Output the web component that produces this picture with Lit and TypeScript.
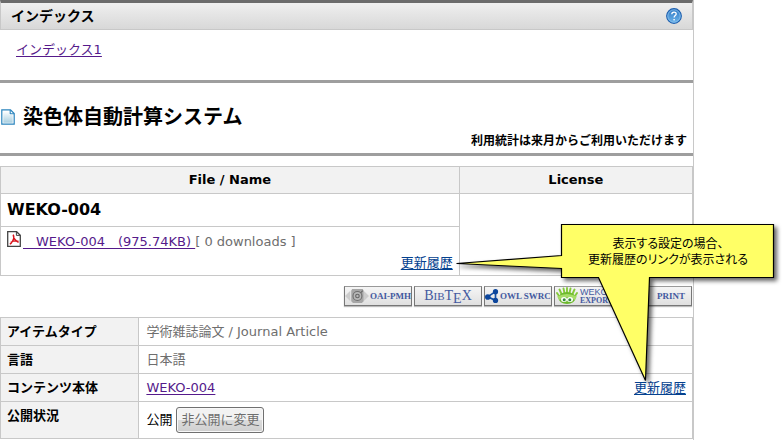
import { LitElement, html, css, svg } from "lit";
import { customElement } from "lit/decorators.js";

const pageIcon = html`<svg class="page-icon" viewBox="0 0 14 16" aria-hidden="true">
  <defs><linearGradient id="pg" x1="0" y1="0" x2="0" y2="1"><stop offset="0" stop-color="#fff"/><stop offset="1" stop-color="#a9cfe0"/></linearGradient></defs>
  <path d="M.8.8H9.5L13.2 4.5V15.2H.8Z" fill="#fff" stroke="#2a84bd" stroke-width="1.2"/>
  <path d="M2.3 2.3H8V6H11.7V13.7H2.3Z" fill="url(#pg)"/>
  <path d="M9.2 1V4.8H13" fill="none" stroke="#2a84bd" stroke-width="1.1"/>
</svg>`;

const pdfIcon = html`<svg class="pdf-icon" viewBox="0 0 14 16" aria-hidden="true">
  <path d="M.7.7H9.6L13.3 4.2V15.3H.7Z" fill="#fff" stroke="#444" stroke-width="1.3"/>
  <path d="M9.4 1V4.4H13" fill="none" stroke="#444" stroke-width="1"/>
  <path d="M6.2 3.6C7.2 5.8 7 8 5.6 10.2 4.8 11.6 3.8 12.8 2.8 13.2M6.6 5.6C7 8 8.4 9.6 11.6 11.4M3.8 11.4C6 10 8.6 9.6 11.4 10.2" fill="none" stroke="#d8141c" stroke-width="1.4"/>
</svg>`;

const helpIcon = html`<svg class="help-icon" viewBox="0 0 16 16" aria-hidden="true">
  <defs><linearGradient id="hg" x1="0" y1="0" x2="0" y2="1"><stop offset="0" stop-color="#2f78c4"/><stop offset="1" stop-color="#6db4ea"/></linearGradient></defs>
  <circle cx="8" cy="8" r="7.3" fill="url(#hg)" stroke="#1e5fae" stroke-width="1.2"/>
  <circle cx="8" cy="8" r="6.2" fill="none" stroke="#8cc3ee" stroke-width=".8"/>
  <path d="M5.8 6.2C5.8 3.4 10.2 3.4 10.2 5.9 10.2 7.6 8.1 7.6 8.1 9.6" fill="none" stroke="#fff" stroke-width="1.3"/>
  <rect x="7.4" y="11" width="1.4" height="1.4" fill="#fff"/>
</svg>`;

const oaiIcon = html`<svg class="oai-icon" viewBox="0 0 27 18" aria-hidden="true">
  <path d="M0 9L6 3V15ZM27 9L21 3V15Z" fill="#ccc"/>
  <path d="M8 1H20L21 3V15L19 17H9L7 15V3Z" fill="#a6a6a6"/>
  <circle cx="14" cy="9" r="5" fill="#b8b8b8" stroke="#6e6e6e" stroke-width="1.2"/>
  <circle cx="14" cy="9" r="2" fill="none" stroke="#666" stroke-width="1.3"/>
  <path d="M17.5 5.5L20 3" stroke="#666" stroke-width="1.2"/>
</svg>`;

const owlIcon = html`<svg class="owl-icon" viewBox="0 0 16 16" aria-hidden="true">
  <path d="M12 3L3 9L12 13Z" fill="none" stroke="#1450a6" stroke-width="1.9"/>
  <circle cx="12" cy="3" r="3" fill="#0c469c"/><circle cx="3.2" cy="9.2" r="3.2" fill="#0c469c"/><circle cx="12" cy="13" r="3" fill="#0c469c"/>
</svg>`;

const wekoIcon = html`<svg class="weko-icon" viewBox="0 0 22 18" aria-hidden="true">
  <path d="M3 9L1 6M5.5 7L3.5 2.5M8.5 6L7.5 1.5M11 6V1M13.5 6L14.5 1.5M16.5 7L18.5 2.5M19 9L21 6" stroke="#84c93a" stroke-width="1.9" stroke-linecap="round"/>
  <ellipse cx="11" cy="11" rx="8.6" ry="6" fill="#6dba2d"/>
  <path d="M1 9.6Q11 4.6 21 9.6L18.6 13Q11 7.6 3.4 13Z" fill="#a6dc68"/>
  <ellipse cx="8" cy="12.4" rx="3" ry="2.5" fill="#fff"/><ellipse cx="14" cy="12.4" rx="3" ry="2.5" fill="#fff"/>
  <circle cx="8.2" cy="12.8" r="1.5" fill="#348b3a"/><circle cx="13.8" cy="12.8" r="1.5" fill="#348b3a"/>
</svg>`;

const calloutShape = svg`
  <path d="M105.5 .5H317.5V53.5H193.5L189.5 156.5L142.5 53.5H105.5V44.5L.5 39.5L105.5 31.5Z" fill="#ff6" stroke="#000" stroke-width="1.2"/>`;

@customElement("app-root")
export class AppRoot extends LitElement {
  static styles = css`
    :host {
      display: block;
      padding-right: 89px;
      font: 13px/20px "DejaVu Sans", "Noto Sans CJK JP", sans-serif;
      color: #000;
      background: #fff;
    }
    * { box-sizing: border-box; }
    h1, h2, p { margin: 0; }
    svg { display: block; flex: none; }
    .page { position: relative; border-right: 1px solid #c8c8c8; padding-bottom: 1px; }
    .bar {
      display: flex; align-items: center; justify-content: space-between;
      height: 30px; padding: 0 10px;
      border: 1px solid #c8c8c8; border-top: 3px solid #6b6b6b;
      background: linear-gradient(#efefef, #d8d8d8);
    }
    .bar h2 { font-size: 14px; line-height: 20px; }
    .help { border: 0; padding: 0; background: none; }
    .help-icon { width: 16px; height: 16px; }
    a { color: #04418f; text-underline-offset: 2px; }
    a.seen { color: #551a8b; }
    .crumbs { height: 53px; padding: 10px 16px; border-bottom: 3px solid #9e9e9e; }
    .title { padding: 20px 6px 2px 1px; border-bottom: 3px solid #9e9e9e; }
    .title-line { display: flex; align-items: center; gap: 8px; }
    .title h1 { font-size: 20px; line-height: 28px; }
    .page-icon { width: 14px; height: 16px; }
    .note { font-size: 12px; line-height: 20px; font-weight: bold; text-align: right; }
    table { width: 100%; border-collapse: collapse; }
    th, td { border: 1px solid #c8c8c8; padding: 0 6px; text-align: left; }
    th { background: #f2f2f2; }
    .files { margin-top: 10px; table-layout: fixed; }
    .files th { height: 27px; text-align: center; }
    .name-col { width: 66.3%; }
    .files .name { height: 33px; font-size: 16px; font-weight: bold; }
    .files .entry { height: 49px; padding-top: 4px; padding-bottom: 2px; }
    .file { display: flex; line-height: 22px; color: #6e6e6e; gap: 2px; white-space: pre; }
    .pdf-icon { width: 14px; height: 16px; }
    .history { text-align: right; }
    .badges { display: flex; justify-content: flex-end; gap: 2px; padding: 10px 1px 11px 0; }
    .badge {
      display: flex; align-items: center; justify-content: center; gap: 1px;
      width: 68px; height: 20px; padding: 0; white-space: nowrap;
      border: 1px solid #777; border-top-color: #999; border-radius: 0;
      background: linear-gradient(#f5f5f5, #e0e0e0); box-shadow: 0 1px 1px #bbb;
      font: bold 9px/18px "Liberation Serif", serif; color: #4359a0;
    }
    .oai-icon { width: 24px; height: 16px; }
    .owl-icon { width: 14px; height: 16px; }
    .weko-icon { width: 22px; height: 18px; }
    .bibtex { font-size: 14px; font-weight: normal; }
    .bibtex small { font-size: 11px; }
    .bibtex sub { font-size: 14px; line-height: 8px; vertical-align: -3px; }
    .print { padding-left: 26px; }
    .stack { display: flex; flex-direction: column; text-align: left; font-size: 8px; line-height: 8px; }
    .stack span { font: 9px/10px "Liberation Sans", sans-serif; }
    .weko { justify-content: flex-start; gap: 2px; padding-left: 1px; }
    .meta th { width: 20%; vertical-align: top; padding-top: 4px; }
    .meta td { color: #6e6e6e; padding-left: 7px; }
    .meta tr { height: 28px; }
    .meta .last { height: 37px; }
    .row { display: flex; justify-content: space-between; }
    .status { display: flex; align-items: center; gap: 4px; color: #000; }
    .change {
      height: 26px; padding: 0 4px; font: inherit; color: #6e6e6e;
      border: 1px solid #707070; border-radius: 3px;
      background: linear-gradient(#f2f2f2 50%, #dcdcdc 50%, #cfcfcf);
      box-shadow: inset 0 0 0 1px #f8f8f8;
    }
    .callout { position: absolute; top: 224px; right: -81px; width: 318px; height: 160px; pointer-events: none; }
    .callout svg { width: 318px; height: 160px; overflow: visible; filter: drop-shadow(3px 3px 2px rgba(0, 0, 0, 0.6)); }
    .callout p {
      position: absolute; top: 11px; right: 0; width: 212px; text-align: center;
      font: 12px/16px "Noto Sans CJK JP", sans-serif; font-feature-settings: "palt";
    }
  `;

  render() {
    return html`<main class="page">
      <header class="bar"><h2>インデックス</h2><button class="help" aria-label="ヘルプ">${helpIcon}</button></header>
      <nav class="crumbs"><a class="seen" href="#">インデックス1</a></nav>
      <section class="title">
        <div class="title-line">${pageIcon}<h1>染色体自動計算システム</h1></div>
        <p class="note">利用統計は来月からご利用いただけます</p>
      </section>
      <table class="files">
        <thead><tr><th class="name-col">File / Name</th><th>License</th></tr></thead>
        <tbody>
          <tr><td class="name">WEKO-004</td><td rowspan="2"></td></tr>
          <tr><td class="entry">
            <div class="file">${pdfIcon}<span><a class="seen" href="#">　WEKO-004　(975.74KB) </a>[ 0 downloads ]</span></div>
            <div class="history"><a href="#">更新履歴</a></div>
          </td></tr>
        </tbody>
      </table>
      <div class="badges">
        <button class="badge">${oaiIcon}<span>OAI-PMH</span></button>
        <button class="badge bibtex"><span>B<small>IB</small>T<sub>E</sub>X</span></button>
        <button class="badge">${owlIcon}<span>OWL SWRC</span></button>
        <button class="badge weko">${wekoIcon}<span class="stack"><span>WEKO</span>EXPORT</span></button>
        <button class="badge print">PRINT</button>
      </div>
      <table class="meta">
        <tbody>
          <tr><th scope="row">アイテムタイプ</th><td>学術雑誌論文 / Journal Article</td></tr>
          <tr><th scope="row">言語</th><td>日本語</td></tr>
          <tr><th scope="row">コンテンツ本体</th><td><div class="row"><a class="seen" href="#">WEKO-004</a><a href="#">更新履歴</a></div></td></tr>
          <tr class="last"><th scope="row">公開状況</th><td><div class="status">公開<button class="change">非公開に変更</button></div></td></tr>
        </tbody>
      </table>
      <aside class="callout">
        <svg viewBox="0 0 318 160" aria-hidden="true">${calloutShape}</svg>
        <p>表示する設定の場合、<br>更新履歴のリンクが表示される</p>
      </aside>
    </main>`;
  }
}
